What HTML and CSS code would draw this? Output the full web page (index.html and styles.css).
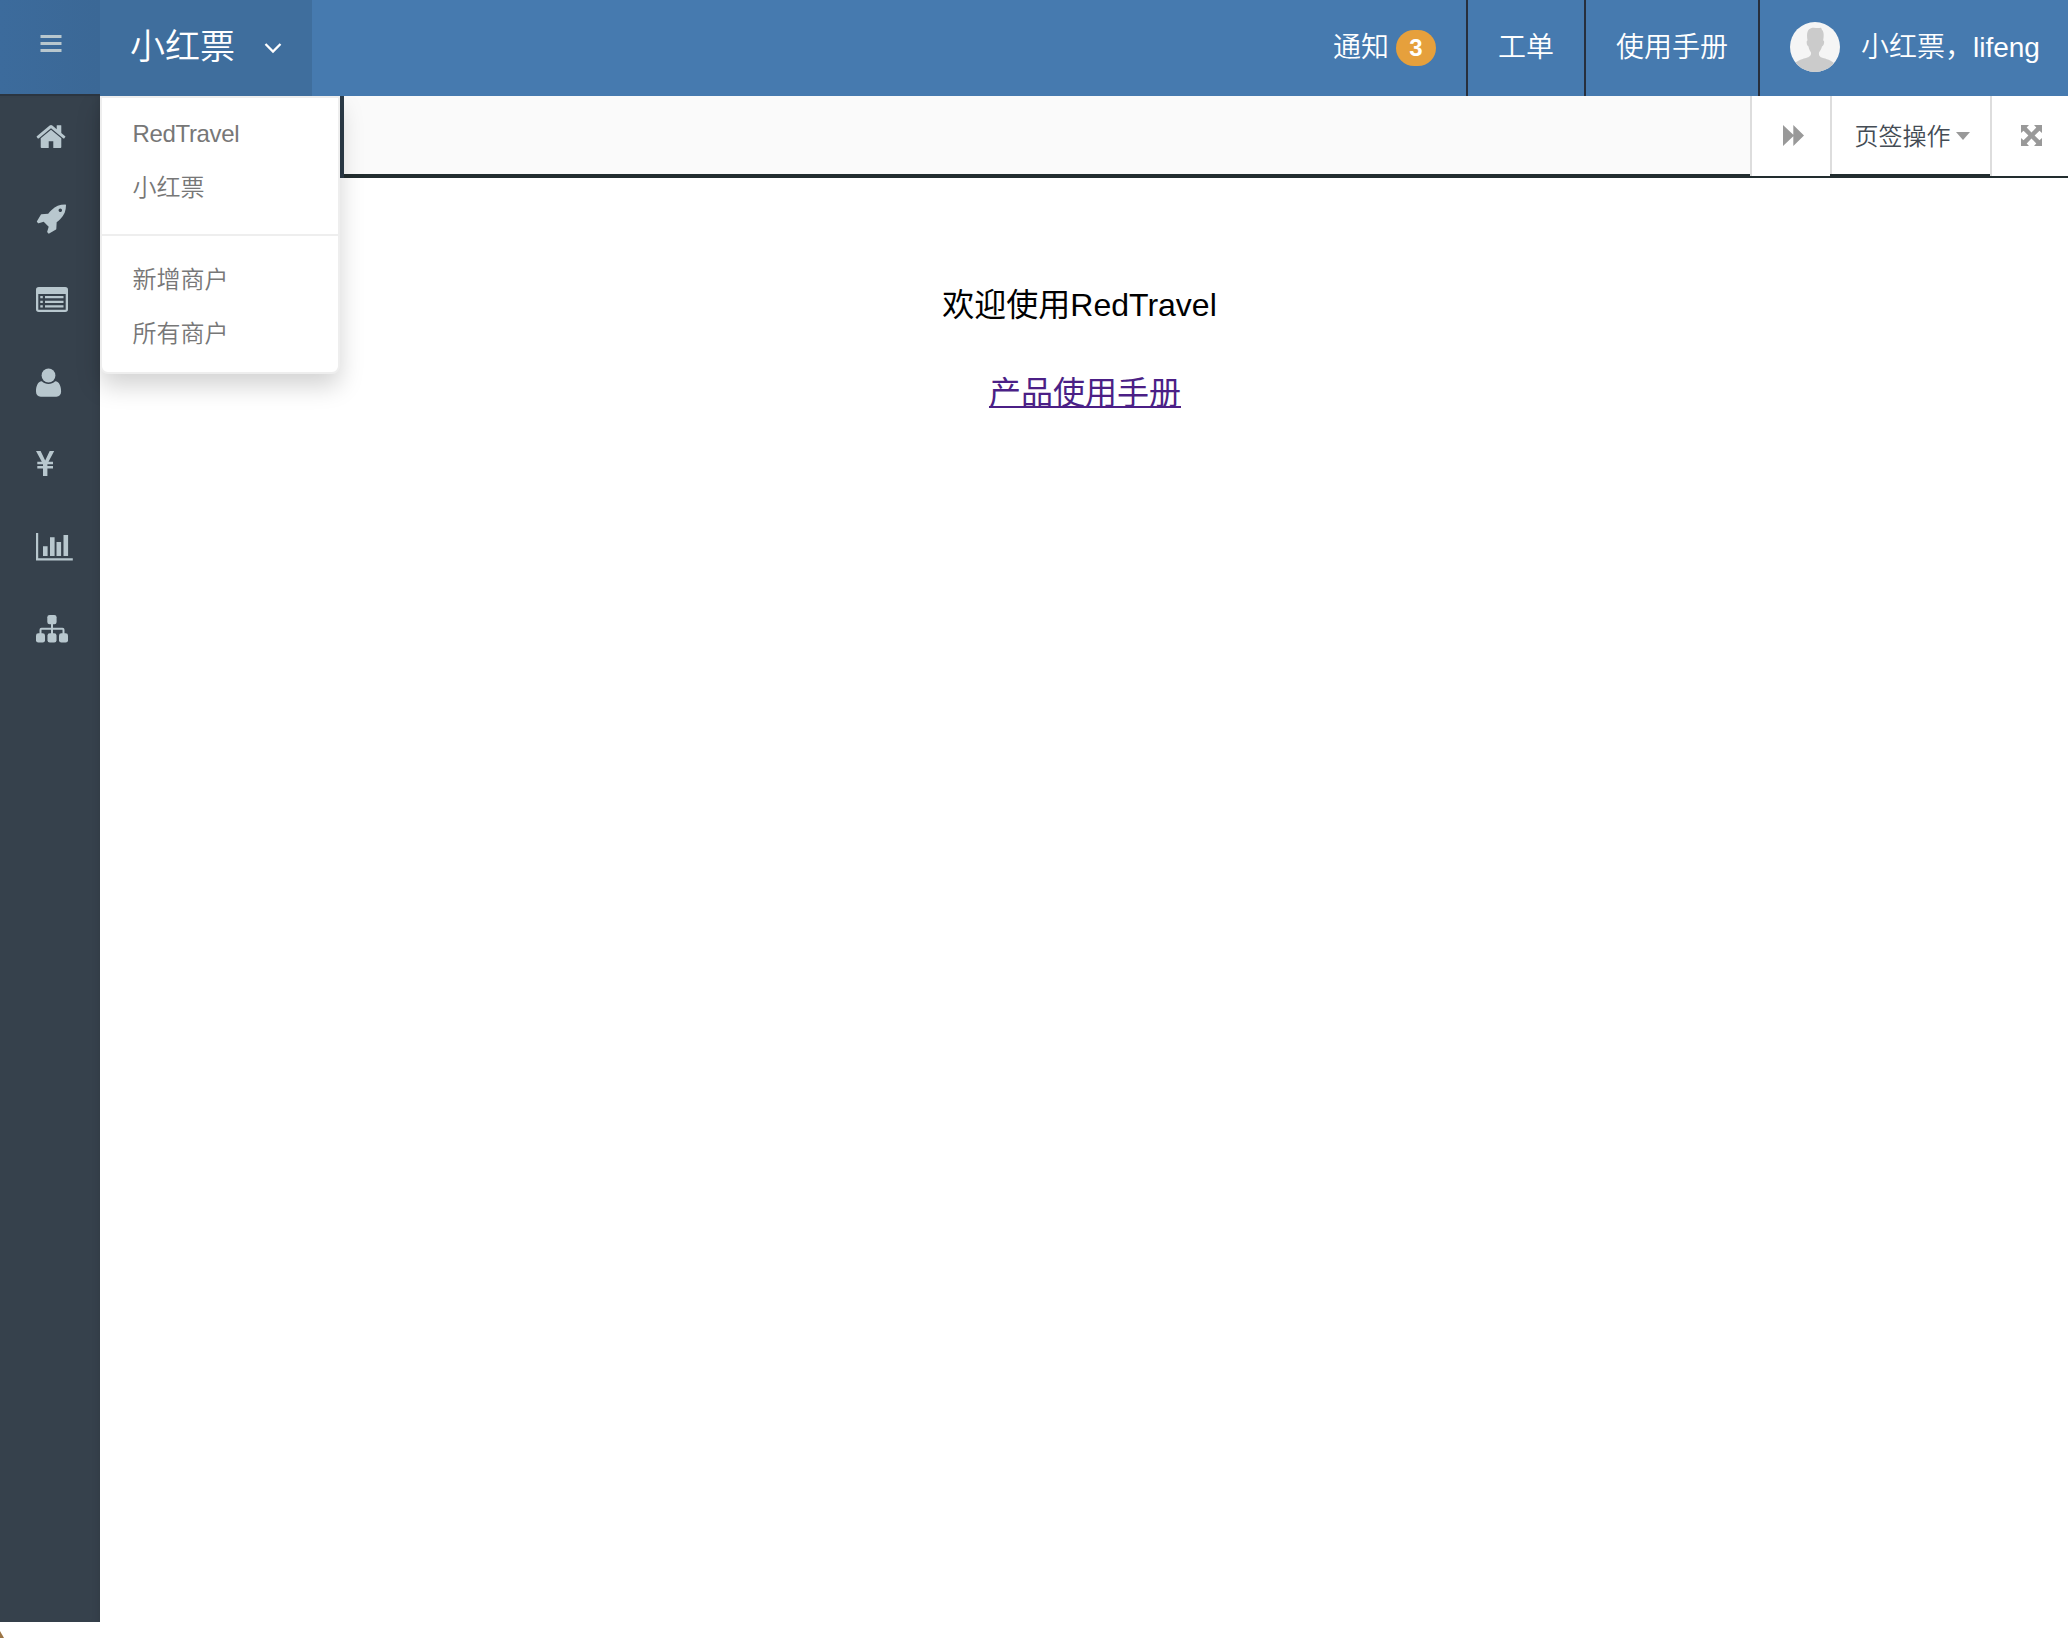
FILE: index.html
```html
<!DOCTYPE html>
<html lang="zh-CN">
<head>
<meta charset="utf-8">
<title>RedTravel</title>
<link rel="stylesheet" href="styles.css">
</head>
<body>
<header class="header">
  <button class="toggle" aria-label="菜单"><svg width="22" height="18" viewBox="0 0 22 18"><path d="M.5 0h21v3H.5zM.5 7h21v3H.5zM.5 14h21v3H.5z"/></svg></button>
  <div class="brand">
    <span class="brand-name">小红票</span>
    <svg class="chevron" width="18" height="12" viewBox="0 0 18 12"><path d="M1.500 2 9 9.500 16.500 2"/></svg>
    <div class="menu">
      <a class="menu-item latin">RedTravel</a>
      <a class="menu-item">小红票</a>
      <div class="menu-line"></div>
      <a class="menu-item">新增商户</a>
      <a class="menu-item">所有商户</a>
    </div>
  </div>
  <nav class="links">
    <a class="link notice">通知<span class="badge">3</span></a>
    <a class="link ticket">工单</a>
    <a class="link manual">使用手册</a>
    <a class="link user">
      <svg class="avatar" width="50" height="50" viewBox="0 0 50 50"><defs><clipPath id="round"><circle cx="25" cy="25" r="25"/></clipPath></defs><g clip-path="url(#round)"><path fill="#f5f5f5" d="M0 0h50v50H0z"/><path fill="#cbcbcb" d="M17.500 18.500c-1-7-.5-11 4-12.500 3-1 6 .8 9-.2 1.500-.3.500 1 1.500 2 2.300 2.500 1.800 7 1.200 10.700 1.800 0 .8 5.500-1.200 6-.8 3-2 4.500-3 6-.4 3 .5 4.500 4 5.500 6 1.500 9 3 12 6v8H4v-8c3-3 6-4.500 12-6 3.500-1 5.500-2.500 5-5.500-1-1.500-2-3-2.500-6-1.800-.5-2.500-6-1-6z"/></g></svg>
      <span>小红票，lifeng</span>
    </a>
  </nav>
</header>
<div class="main">
  <aside class="sidebar">
    <a class="nav-item"><svg viewBox="0 0 100 82"><path transform="translate(35 24.600) scale(.01786)" d="M1472 992v480q0 26-19 45t-45 19h-384v-384h-256v384h-384q-26 0-45-19t-19-45v-480q0-1 .5-3t.5-3l575-474 575 474q1 2 1 6zm223-69l-62 74q-8 9-21 11h-3q-13 0-21-7l-692-577-692 577q-12 8-24 7-13-2-21-11l-62-74q-8-10-7-23.500t11-21.500l719-599q32-26 76-26t76 26l244 204v-195q0-14 9-23t23-9h192q14 0 23 9t9 23v408l219 182q10 8 11 21.500t-7 23.500z"/></svg></a>
    <a class="nav-item"><svg viewBox="0 0 100 82"><path transform="translate(36.300 24.200) scale(.01786)" d="M1440 448q0-40-28-68t-68-28-68 28-28 68 28 68 68 28 68-28 28-68zm224-288q0 249-75.500 430.500t-253.500 360.500q-81 80-195 176l-20 379q-2 16-16 26l-384 224q-7 4-16 4-12 0-23-9l-64-64q-13-14-8-32l85-276-281-281-276 85q-3 1-9 1-14 0-23-9l-64-64q-17-19-5-39l224-384q10-14 26-16l379-20q96-114 176-195 188-187 358-258t431-71q14 0 24 9.500t10 22.500z"/></svg></a>
    <a class="nav-item"><svg viewBox="0 0 100 82"><path fill-rule="evenodd" d="M38.800 27h26.400a2.800 2.800 0 0 1 2.800 2.800v19.400a2.800 2.800 0 0 1-2.800 2.800H38.800a2.800 2.800 0 0 1-2.800-2.800V29.800a2.800 2.800 0 0 1 2.800-2.800zM38.300 34v15.700h27.400V34z"/><path d="M40.300 36h2.500v2.200h-2.500zM45 36h18.500v2.200H45zM40.300 40.700h2.500v2.200h-2.500zM45 40.700h18.500v2.200H45zM40.300 45.300h2.500v2.200h-2.500zM45 45.300h18.500v2.200H45z"/></svg></a>
    <a class="nav-item"><svg viewBox="0 0 100 82"><circle cx="48.500" cy="33.500" r="6.900"/><path d="M41.800 39.300c3.800 3.600 9.600 3.600 13.400 0 4.300.4 5.900 5.200 5.900 10.200 0 3.300-1.900 5.200-4.700 5.200H40.700c-2.800 0-4.700-1.900-4.700-5.200 0-5 1.500-9.800 5.800-10.200z"/></svg></a>
    <a class="nav-item"><svg viewBox="0 0 100 82"><path d="M36 27h4.600l4.600 9.500L49.700 27h4.500l-5.700 10.800H53v2.500h-5.600v1.700H53v2.500h-5.600V52H43v-7.500h-5.700V42H43v-1.700h-5.700v-2.500h4.500z"/></svg></a>
    <a class="nav-item"><svg viewBox="0 0 100 82"><path d="M36 27h2.200v25.200h34.600v2.200H36zM43 40.300h4.600v9.600H43zM50 31.200h4.600v18.700H50zM56.500 36h4.600v13.900h-4.600zM63.500 29h4.600v20.900h-4.600z"/></svg></a>
    <a class="nav-item"><svg viewBox="0 0 100 82"><rect x="47.300" y="27" width="9.300" height="9.200" rx="2.300"/><rect x="36" y="45.300" width="9" height="9.200" rx="2.300"/><rect x="47.500" y="45.300" width="9" height="9.200" rx="2.300"/><rect x="59" y="45.300" width="9" height="9.200" rx="2.300"/><path d="M40.500 46v-4.200q0-1 1-1h21q1 0 1 1V46M52 36v10" fill="none" stroke="#b8c7ce" stroke-width="2"/></svg></a>
  </aside>
  <section class="content">
    <div class="tabs">
      <div class="tab-track"></div>
      <button class="tab-button next"><svg width="21" height="21" viewBox="0 0 21 21"><path d="M0 0l10.300 9.800V0L21 10.500 10.300 21v-9.800L0 21z"/></svg></button>
      <button class="tab-button actions">页签操作<i class="caret"></i></button>
      <button class="tab-button full"><svg width="21" height="21" viewBox="0 0 21 21"><path d="M0 0h8L5.700 2.500l4.800 4.900 4.800-4.900L13 0h8v8l-2.500-2.300-4.900 4.800 4.900 4.800L21 13v8h-8l2.300-2.500-4.800-4.900-4.800 4.900L8 21H0v-8l2.500 2.300 4.900-4.800-4.900-4.800L0 8z"/></svg></button>
    </div>
    <div class="welcome">
      <p class="title">欢迎使用RedTravel&nbsp;</p>
      <p class="guide"><a>产品使用手册</a></p>
    </div>
  </section>
</div>
<footer class="footer"><i class="corner"></i></footer>
</body>
</html>
```
FILE: styles.css
```css
* { box-sizing: border-box; }
body {
  margin: 0;
  height: 1638px;
  display: flex;
  flex-direction: column;
  overflow: hidden;
  background: #fff;
  font-family: "Liberation Sans", "Noto Sans CJK SC", sans-serif;
  font-weight: 350;
}
button { border: 0; padding: 0; font: inherit; }
p { margin: 0; }

.header { height: 96px; flex: none; display: flex; background: #467aaf; color: #fff; }
.toggle {
  width: 100px;
  height: 96px;
  padding: 0 0 7px 1px;
  display: flex;
  align-items: center;
  justify-content: center;
  background: linear-gradient(90deg, #3c6b9c, #3b6896);
  border-bottom: 2px solid #2b3540;
}
.toggle svg { fill: #b8c7ce; }
.brand {
  position: relative;
  width: 212px;
  padding: 0 30px;
  display: flex;
  justify-content: space-between;
  background: #3f6e9d;
}
.brand-name { font-size: 35px; line-height: 94px; white-space: nowrap; }
.chevron { margin-top: 42px; fill: none; stroke: #fff; stroke-width: 2.300; }
.menu {
  position: absolute;
  z-index: 2;
  top: 96px;
  left: 0;
  width: 240px;
  height: 278px;
  padding-top: 9px;
  background: #fff;
  border: 2px solid #eee;
  border-radius: 0 0 8px 8px;
  box-shadow: 0 12px 24px rgba(0, 0, 0, .175);
  clip-path: inset(0 -40px -50px -40px);
}
.menu-item { display: block; padding-left: 30.500px; font-size: 24px; line-height: 54px; color: #777; }
.latin { letter-spacing: -.35px; }
.menu-line { height: 2px; margin: 19px 0 17px; background: #eee; }

.links { margin-left: auto; display: flex; }
.link { display: flex; align-items: center; padding-bottom: 6px; font-size: 28px; border-right: 2px solid #272f3d; white-space: nowrap; }
.notice { width: 135px; }
.badge {
  width: 40px;
  height: 36px;
  margin: 6px 0 0 7px;
  border-radius: 20px;
  background: #e6a03c;
  font-size: 24px;
  font-weight: 700;
  line-height: 36px;
  text-align: center;
}
.ticket { width: 118px; padding-left: 30px; }
.manual { width: 174px; padding-left: 30px; }
.user { width: 308px; padding-left: 30px; gap: 21px; border: 0; }
.avatar { margin-top: 4px; }

.main { flex: 1; display: flex; min-height: 0; }
.sidebar {
  width: 100px;
  flex: none;
  background: #36414c;
  box-shadow: inset -6px 0 8px -6px rgba(0, 0, 0, .12);
}
.nav-item { display: block; height: 82px; }
.nav-item svg { display: block; width: 100px; height: 82px; fill: #b8c7ce; }
.content { flex: 1; min-width: 0; }
.tabs {
  height: 82px;
  margin-left: 240px;
  display: flex;
  align-items: flex-start;
  background: #222d2f;
  border-left: 4px solid #2c3b48;
}
.tab-track { flex: 1; height: 78px; background: #fafafa; }
.tab-button {
  height: 80px;
  padding-bottom: 2px;
  display: flex;
  align-items: center;
  background: #fff;
  border-left: 2px solid #ddd;
  color: #444c55;
}
.tab-button svg { fill: #999; }
.next { width: 80px; padding-left: 30.500px; }
.actions { width: 160px; height: 78px; padding-left: 22.500px; font-size: 24px; }
.caret { margin: 4px 0 0 5px; border: 7px solid transparent; border-top: 8px solid #999; border-bottom: 0; }
.full { width: 78px; padding-left: 28.500px; }

.welcome { padding-top: 102px; text-align: center; font-size: 32px; font-weight: 400; color: #000; }
.title, .guide { line-height: 50px; }
.guide { margin-top: 38px; padding-left: 2px; }
.guide a { color: #4b1f86; text-decoration: underline; text-decoration-thickness: 2px; text-underline-offset: 2px; text-decoration-skip-ink: none; }
.footer { height: 16px; flex: none; display: flex; align-items: flex-end; }
.corner { width: 4px; height: 7px; background: #9b7444; clip-path: polygon(0 0, 100% 100%, 0 100%); }
```
